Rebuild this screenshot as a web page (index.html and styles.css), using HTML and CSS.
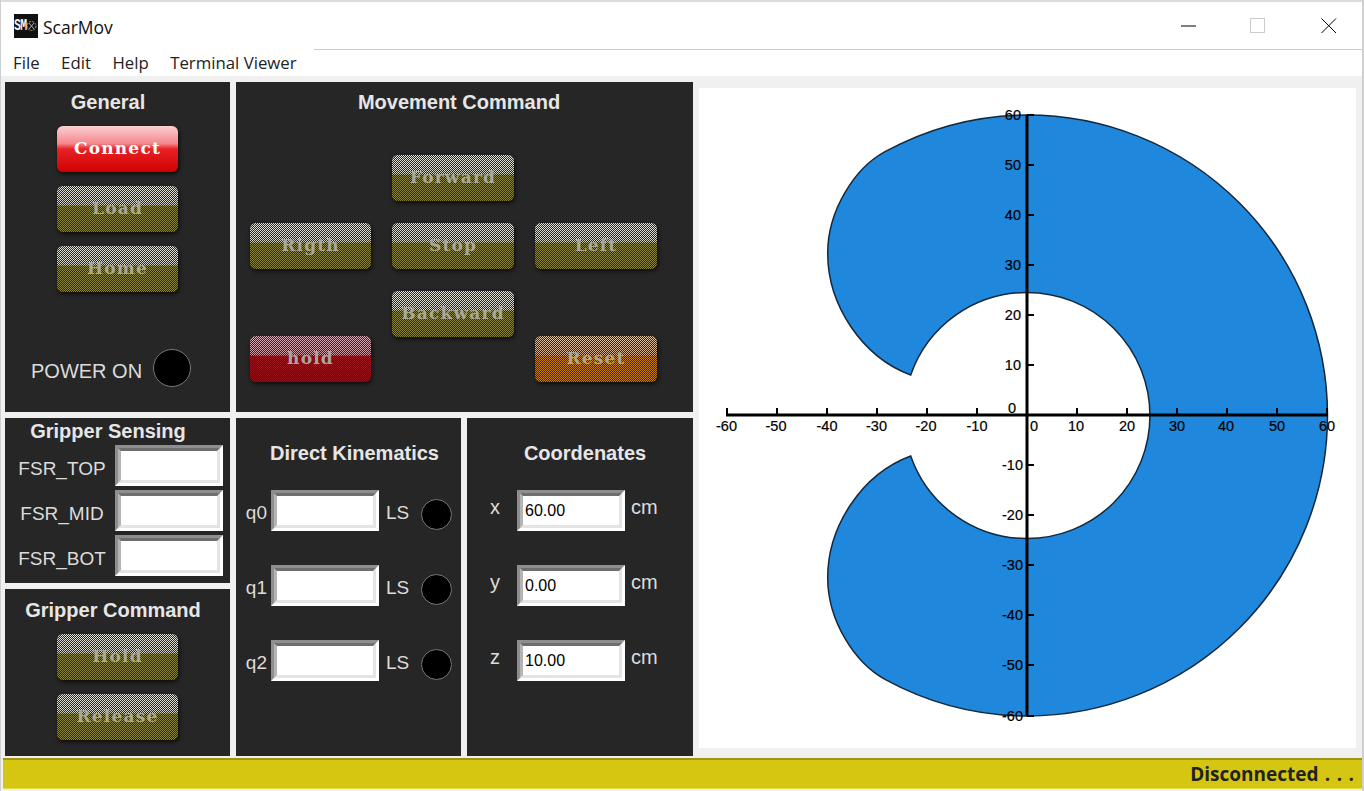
FILE: index.html
```html
<!DOCTYPE html>
<html lang="en">
<head>
    <meta charset="UTF-8">
    <title>ScarMov</title>
    <link rel="stylesheet" href="styles.css">
</head>
<body>
    <!-- Title bar -->
    <header class="titlebar">
        <div class="app-icon"><span class="app-icon-text">SM</span>
            <svg viewBox="0 0 12 24" width="12" height="24"><circle cx="5.5" cy="12" r="4.5" fill="none" stroke="#999" stroke-width="1" stroke-dasharray="2 1"/><path d="M3 9l5 6M8 9l-5 6" stroke="#aaa" stroke-width="1"/></svg>
        </div>
        <div class="app-title">ScarMov</div>
        <div class="win-buttons">
            <svg class="win-min" width="16" height="16" viewBox="0 0 16 16"><path d="M0 8H15" stroke="#000" stroke-width="1"/></svg>
            <svg width="16" height="16" viewBox="0 0 16 16"><rect x="0.5" y="0.5" width="14" height="14" fill="none" stroke="#ccc"/></svg>
            <svg width="16" height="16" viewBox="0 0 16 16"><path d="M0.5 0.5L15 15M15 0.5L0.5 15" stroke="#000" stroke-width="1"/></svg>
        </div>
    </header>

    <nav class="menubar">
        <span>File</span>
        <span>Edit</span>
        <span>Help</span>
        <span>Terminal Viewer</span>
    </nav>

    <main class="workspace">
        <div class="controls">
            <section class="panel general">
                <h2 class="heading heading-general">General</h2>
                <div class="btn-stack">
                    <button class="btn btn-red-on">Connect</button>
                    <button class="btn btn-olive" disabled>Load</button>
                    <button class="btn btn-olive" disabled>Home</button>
                </div>
                <div class="power-row">
                    <span class="label power-label">POWER ON</span>
                    <span class="led led-big"></span>
                </div>
            </section>

            <section class="panel movement">
                <h2 class="heading heading-move">Movement Command</h2>
                <div class="move-grid">
                    <button class="btn btn-olive col-2" disabled>Forward</button>
                    <button class="btn btn-olive col-1" disabled>Rigth</button>
                    <button class="btn btn-olive col-2" disabled>Stop</button>
                    <button class="btn btn-olive col-3" disabled>Left</button>
                    <button class="btn btn-olive col-2" disabled>Backward</button>
                    <button class="btn btn-red col-1" disabled>hold</button>
                    <button class="btn btn-orange col-3" disabled>Reset</button>
                </div>
            </section>

            <section class="panel sensing">
                <h2 class="heading heading-sensing">Gripper Sensing</h2>
                <div class="fsr-row"><span class="label fsr-label">FSR_TOP</span><div class="bevel"><input type="text"></div></div>
                <div class="fsr-row"><span class="label fsr-label">FSR_MID</span><div class="bevel"><input type="text"></div></div>
                <div class="fsr-row"><span class="label fsr-label">FSR_BOT</span><div class="bevel"><input type="text"></div></div>
            </section>

            <section class="panel kinematics">
                <h2 class="heading heading-low heading-kin">Direct Kinematics</h2>
                <div class="kin-row"><span class="label q-label">q0</span><div class="bevel"><input type="text"></div><span class="label ls-label">LS</span><span class="led"></span></div>
                <div class="kin-row"><span class="label q-label">q1</span><div class="bevel"><input type="text"></div><span class="label ls-label">LS</span><span class="led"></span></div>
                <div class="kin-row"><span class="label q-label">q2</span><div class="bevel"><input type="text"></div><span class="label ls-label">LS</span><span class="led"></span></div>
            </section>

            <section class="panel coords">
                <h2 class="heading heading-low heading-coord">Coordenates</h2>
                <div class="coord-row"><span class="label axis-label">x</span><div class="bevel"><input type="text" value="60.00"></div><span class="label cm-label">cm</span></div>
                <div class="coord-row"><span class="label axis-label">y</span><div class="bevel"><input type="text" value="0.00"></div><span class="label cm-label">cm</span></div>
                <div class="coord-row"><span class="label axis-label">z</span><div class="bevel"><input type="text" value="10.00"></div><span class="label cm-label">cm</span></div>
            </section>

            <section class="panel gripper">
                <h2 class="heading heading-gripper">Gripper Command</h2>
                <div class="btn-stack">
                    <button class="btn btn-olive" disabled>Hold</button>
                    <button class="btn btn-olive" disabled>Release</button>
                </div>
            </section>
        </div>

        <!-- Workspace plot, viewBox uses window coordinates -->
        <div class="plot">
            <svg viewBox="699 88 657 660" width="657" height="660">
                <path class="reach" d="M910.7 375A123 123 0 0 1 1027 292.5A123 123 0 0 1 1027 538.5A123 123 0 0 1 910.7 456C862 474 827.7 526 827.7 577.7C827.7 621 855 663 885 679.3A300 300 0 0 0 1027 716A300.5 300.5 0 0 0 1027 115A300 300 0 0 0 885 151.7C855 168 827.7 210 827.7 253.3C827.7 305 862 357 910.7 375Z"/>
                <path class="ticks" d="M727 408V415M777 408V415M827 408V415M877 408V415M927 408V415M977 408V415M1077 408V415M1127 408V415M1177 408V415M1227 408V415M1277 408V415M1327 408V415M1027 115H1034M1027 165H1034M1027 215H1034M1027 265H1034M1027 315H1034M1027 365H1034M1027 465H1034M1027 515H1034M1027 565H1034M1027 615H1034M1027 665H1034M1027 716H1034"/>
                <path class="axes" d="M726 415H1328M1027 115V716"/>
                <g class="x-labels">
                    <text x="726.5" y="431">-60</text>
                    <text x="776" y="431">-50</text>
                    <text x="827" y="431">-40</text>
                    <text x="876.5" y="431">-30</text>
                    <text x="926" y="431">-20</text>
                    <text x="977" y="431">-10</text>
                    <text x="1034" y="431">0</text>
                    <text x="1076" y="431">10</text>
                    <text x="1127" y="431">20</text>
                    <text x="1177" y="431">30</text>
                    <text x="1226" y="431">40</text>
                    <text x="1277" y="431">50</text>
                    <text x="1327" y="431">60</text>
                </g>
                <g class="y-labels">
                    <text x="1021" y="120">60</text>
                    <text x="1021" y="170">50</text>
                    <text x="1021" y="220">40</text>
                    <text x="1021" y="270">30</text>
                    <text x="1021" y="320">20</text>
                    <text x="1021" y="370">10</text>
                    <text x="1016" y="413">0</text>
                    <text x="1023" y="470">-10</text>
                    <text x="1023" y="520">-20</text>
                    <text x="1023" y="570">-30</text>
                    <text x="1023" y="620">-40</text>
                    <text x="1023" y="670">-50</text>
                    <text x="1023" y="721">-60</text>
                </g>
            </svg>
        </div>
    </main>

    <footer class="statusbar">Disconnected . . .</footer>
</body>
</html>
```

FILE: styles.css
```css
html, body {
    margin: 0;
    height: 791px;
    overflow: hidden;
}
body {
    background-color: #f0f0f0;
    font-family: "Liberation Sans", Arial, sans-serif;
    border-left: 1px solid #cfcfcf;
    border-right: 2px solid #cfcfcf;
    box-sizing: border-box;
    width: 1364px;
}

/* title bar */
.titlebar {
    height: 47px;
    border-top: 2px solid #dcdcdc;
    background-color: #fff;
    display: flex;
    align-items: center;
    padding-left: 13px;
    box-sizing: content-box;
}
.app-icon {
    width: 24px;
    height: 24px;
    background-color: #111;
    color: #eee;
    display: flex;
    align-items: center;
    overflow: hidden;
}
.app-icon-text {
    display: inline-block;
    flex: none;
    width: 12px;
    font-family: "Liberation Mono", monospace;
    font-size: 17px;
    font-weight: bold;
    letter-spacing: -1px;
    transform: scaleX(0.68);
    transform-origin: left center;
}
.app-icon svg { flex: none; }
.app-title {
    margin-left: 5px;
    padding-top: 2px;
    font-family: "Open Sans", sans-serif;
    font-size: 17.5px;
    color: #111;
}
.win-buttons {
    margin-left: auto;
    display: flex;
    gap: 55px;
    padding-right: 25px;
}
.win-min { margin-right: -2px; }

/* menu */
.menubar {
    height: 27px;
    background: linear-gradient(#ccc, #ccc) 313px 0 / 100% 1px no-repeat, #fff;
    display: flex;
    align-items: center;
    gap: 21.5px;
    padding-left: 12px;
    font-family: "Open Sans", sans-serif;
    font-size: 16.8px;
    color: #222;
}

/* main layout */
.workspace {
    display: flex;
    gap: 6px;
    padding: 6px 0 0 4px;
}
.controls {
    display: grid;
    grid-template-columns: 225px 225px 226px;
    grid-template-rows: 330px 165px 167px;
    gap: 6px;
}
.panel {
    background-color: #262626;
    color: #e8e8e8;
    display: flex;
    flex-direction: column;
}
.general { grid-column: 1; grid-row: 1; }
.movement { grid-column: 2 / 4; grid-row: 1; }
.sensing { grid-column: 1; grid-row: 2; }
.gripper { grid-column: 1; grid-row: 3; }
.kinematics { grid-column: 2; grid-row: 2 / 4; }
.coords { grid-column: 3; grid-row: 2 / 4; }

.heading {
    margin: 0;
    padding-top: 8px;
    font-size: 20px;
    line-height: 24px;
    font-weight: bold;
    text-align: center;
    color: #e6e6e6;
}
.heading-general { padding-right: 19px; }
.heading-move { padding-right: 11px; }
.heading-sensing { padding: 1px 19px 0 0; }
.heading-gripper { padding: 9px 9px 0 0; }
.heading-low { padding-top: 23px; }
.heading-kin { padding-left: 12px; }
.heading-coord { padding-left: 10px; }
.label {
    font-size: 19px;
    color: #dcdcdc;
    box-sizing: border-box;
}

/* buttons */
.btn {
    position: relative;
    z-index: 0;
    width: 121px;
    height: 46px;
    padding: 0 0 3px;
    border: none;
    border-radius: 6px;
    color: #fff;
    font-family: "DejaVu Serif", serif;
    font-size: 17px;
    font-weight: bold;
    letter-spacing: 1.2px;
    box-shadow: 1px 2px 4px rgba(0, 0, 0, 0.7);
}
.btn:disabled {
    color: #a8a8a0;
}
/* checker over disabled buttons, fixed so every button has the same phase */
.btn:disabled::after {
    content: "";
    position: absolute;
    z-index: -1;
    inset: 0;
    border-radius: 6px;
    background: url("data:image/svg+xml,%3Csvg xmlns='http://www.w3.org/2000/svg' width='2' height='2' shape-rendering='crispEdges'%3E%3Cpath d='M1 0h1v1H1zM0 1h1v1H0z' fill='%23262626'/%3E%3C/svg%3E") 0 0 / 2px 2px fixed;
}
.btn-red-on {
    background: linear-gradient(#fcd0d2, #f5888c 38%, #e82226 50%, #d00000);
}
.btn-olive {
    background: linear-gradient(#e8e8e0, #d0d0c6 42%, #8f8a3c 43%, #88823a);
}
.btn-red {
    background: linear-gradient(#dcb4bc, #cc989f 42%, #9c1820 43%, #901018);
}
.btn-orange {
    background: linear-gradient(#e0c8ac, #cca888 42%, #c88410 43%, #c07c08);
}
.btn-stack {
    display: flex;
    flex-direction: column;
    align-items: center;
    gap: 14px;
    padding-top: 12px;
}
.move-grid {
    display: grid;
    grid-template-columns: 121px 122px 122px;
    grid-template-rows: 68px 68px 45px 46px;
    column-gap: 21px;
    padding: 41px 0 0 14px;
}
.move-grid .btn { width: 100%; }
.col-1 { grid-column: 1; }
.col-2 { grid-column: 2; }
.col-3 { grid-column: 3; }
.move-grid .btn:first-child { grid-row: 1; }
.move-grid .btn:nth-child(n+2):nth-child(-n+4) { grid-row: 2; }
.move-grid .btn:nth-child(5) { grid-row: 3; }
.move-grid .btn-red, .move-grid .btn-orange { grid-row: 4; }

/* LEDs */
.led {
    width: 29px;
    height: 29px;
    border-radius: 50%;
    background-color: #000;
    border: 1px solid #777;
    flex: none;
}
.led-big {
    width: 36px;
    height: 36px;
}
.power-row {
    display: flex;
    align-items: center;
    gap: 11px;
    padding: 57px 0 0 26px;
}
.power-label { padding-top: 7px; font-size: 20px; }

/* bevelled text boxes */
.bevel {
    width: 108px;
    height: 41px;
    box-sizing: border-box;
    border: 3px solid;
    border-color: #8e8e8e #fff #fff #8e8e8e;
    flex: none;
}
.bevel input {
    display: block;
    width: 100%;
    height: 100%;
    box-sizing: border-box;
    border: 3px solid;
    border-color: #6e6e6e #e4e4e4 #e4e4e4 #b4b4b4;
    outline: none;
    padding: 1px 0 0 2px;
    margin: 0;
    font-family: "Liberation Sans", Arial, sans-serif;
    font-size: 16px;
    color: #000;
    background-color: #fff;
}

/* gripper sensing */
.fsr-row {
    display: flex;
    align-items: center;
    margin-bottom: 4px;
}
.sensing .heading { margin-bottom: 2px; }
.fsr-label {
    width: 110px;
    text-align: center;
    padding: 7px 0 0 4px;
}

/* direct kinematics */
.kin-row, .coord-row {
    display: flex;
    align-items: center;
    height: 41px;
    margin-bottom: 34px;
}
.kinematics .heading, .coords .heading { margin-bottom: 25px; }
.q-label {
    width: 31px;
    margin-right: 4px;
    text-align: right;
    padding-top: 5px;
}
.ls-label {
    width: 24px;
    margin-left: 7px;
    padding-top: 5px;
}
.kin-row .led {
    margin: 7px 0 0 11px;
}

/* coordinates */
.axis-label {
    width: 50px;
    padding: 0 0 6px 6px;
    text-align: center;
    font-size: 20px;
}
.cm-label {
    margin-left: 6px;
    padding-bottom: 6px;
    font-size: 20px;
}

/* plot */
.plot {
    width: 657px;
    height: 660px;
    margin-top: 6px;
    background-color: #fff;
}
.plot svg { display: block; }
.reach {
    fill: #2088dc;
    stroke: #14283c;
    stroke-width: 1.5;
}
.axes {
    fill: none;
    stroke: #000;
    stroke-width: 3;
}
.ticks {
    fill: none;
    stroke: #000;
    stroke-width: 2;
}
.plot text {
    font-family: "Liberation Sans", Arial, sans-serif;
    font-size: 14.5px;
    fill: #000;
    stroke: #000;
    stroke-width: 0.2;
}
.x-labels text { text-anchor: middle; }
.y-labels text { text-anchor: end; }

/* status bar */
.statusbar {
    position: absolute;
    left: 3px;
    top: 758px;
    width: 1359px;
    height: 31px;
    box-sizing: border-box;
    border-top: 2px solid #a09412;
    border-bottom: 1px solid #e6da40;
    background-color: #d5c611;
    color: #222;
    font-family: "Open Sans", sans-serif;
    font-size: 19px;
    font-weight: bold;
    word-spacing: 1.5px;
    line-height: 29px;
    text-align: right;
    padding-right: 8px;
}
```
